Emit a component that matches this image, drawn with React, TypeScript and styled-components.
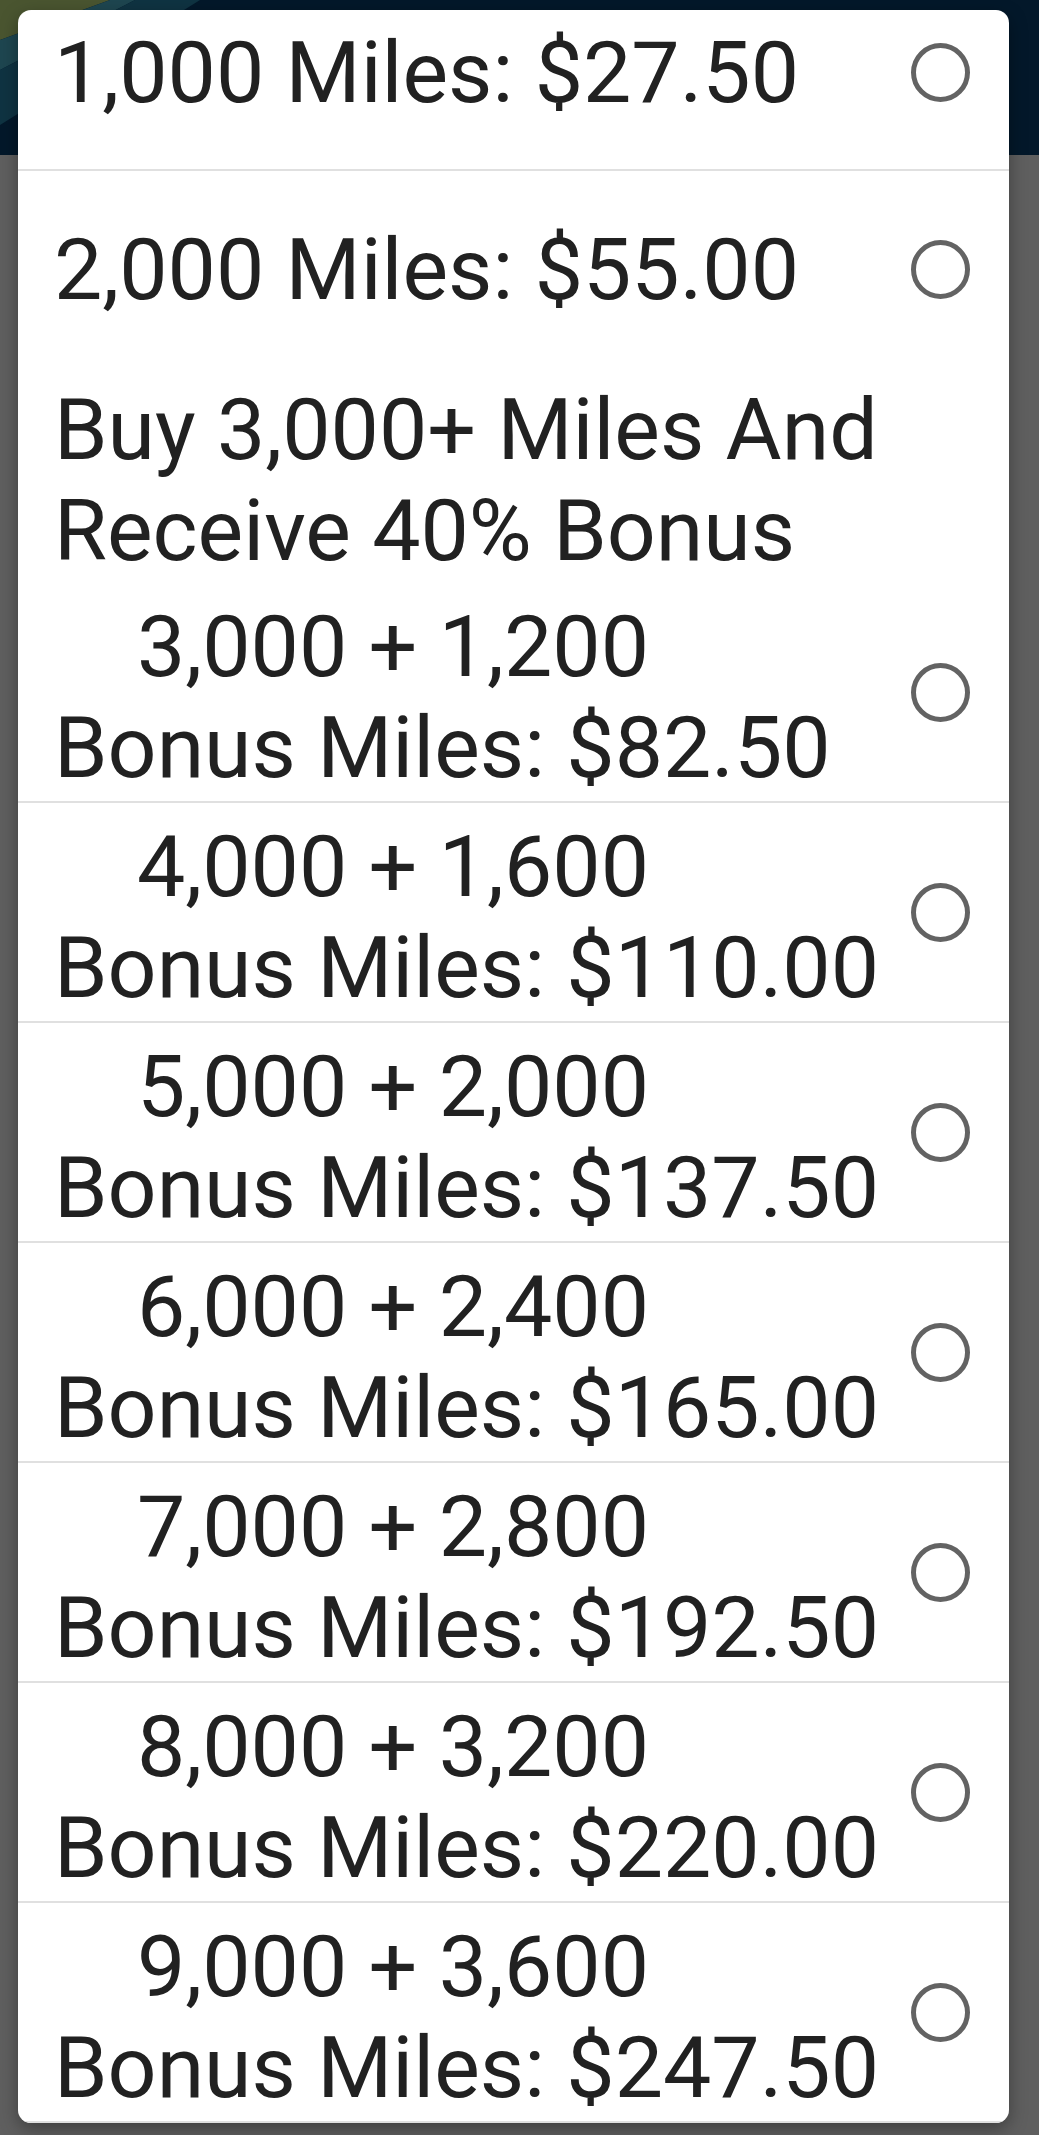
import React from "react";
import styled, { createGlobalStyle } from "styled-components";

const GlobalStyle = createGlobalStyle`
  html, body {
    margin: 0;
    padding: 0;
    background: #5f5f5f;
  }
  * { box-sizing: border-box; }
`;

const Screen = styled.div`
  position: relative;
  width: 1039px;
  height: 2135px;
  overflow: hidden;
  display: flex;
  flex-direction: column;
  background: #5f5f5f;
  font-family: Roboto, "Noto Sans", "Liberation Sans", sans-serif;
`;

const AppBar = styled.header`
  height: 155px;
  flex: none;
  background: #03182a;
  position: relative;
  overflow: hidden;
`;

const AppBody = styled.main`
  flex: 1;
  background: #5f5f5f;
`;

const Dialog = styled.div`
  position: absolute;
  top: 10px;
  left: 18px;
  right: 30px;
  bottom: 12px;
  background: #ffffff;
  border-radius: 13px;
  overflow: hidden;
  box-shadow: 0 6px 18px rgba(0, 0, 0, 0.35);
`;

const OptionList = styled.div`
  display: flex;
  flex-direction: column;
  margin-top: -35px;
`;

const OptionRow = styled.label<{ $divider?: boolean; $twoLine?: boolean }>`
  display: flex;
  align-items: center;
  justify-content: space-between;
  min-height: 196px;
  padding: ${(p) => (p.$twoLine ? "13px 39px 3px 36px" : "8px 39px 8px 36px")};
  border-bottom: ${(p) => (p.$divider ? "2px solid #e0e0e0" : "none")};
`;

const GroupHeading = styled.div`
  padding: 12px 36px 2px 36px;
  font-size: 86px;
  line-height: normal;
  color: #212121;
`;

const Label = styled.span`
  display: flex;
  flex-direction: column;
  font-size: 86px;
  line-height: normal;
  color: #212121;
  white-space: nowrap;
`;

const Line = styled.span<{ $indent?: boolean }>`
  display: block;
  padding-left: ${(p) => (p.$indent ? "83px" : "0")};
`;

const Radio = styled.span<{ $shift?: boolean }>`
  flex: none;
  width: 59px;
  height: 59px;
  border-radius: 50%;
  border: 5px solid #636363;
  background: #ffffff;
  margin-top: ${(p) => (p.$shift ? "-10px" : "0")};
`;

const single = [
  { text: "1,000 Miles: $27.50", divider: true },
  { text: "2,000 Miles: $55.00", divider: false },
];

const bonus = [
  ["3,000 + 1,200", "$82.50"],
  ["4,000 + 1,600", "$110.00"],
  ["5,000 + 2,000", "$137.50"],
  ["6,000 + 2,400", "$165.00"],
  ["7,000 + 2,800", "$192.50"],
  ["8,000 + 3,200", "$220.00"],
  ["9,000 + 3,600", "$247.50"],
];

export default function App() {
  return (
    <>
      <GlobalStyle />
      <Screen>
        <AppBar>
          <svg width="260" height="155" viewBox="0 0 260 155">
            <polygon points="0,0 110,0 0,40" fill="#4a5530" />
            <polygon points="0,40 110,0 135,0 0,70" fill="#1e4650" />
            <polygon points="0,70 135,0 200,0 0,125" fill="#0f3342" />
          </svg>
        </AppBar>
        <AppBody />
        <Dialog>
          <OptionList>
            {single.map((s) => (
              <OptionRow key={s.text} $divider={s.divider}>
                <Label>
                  <Line>{s.text}</Line>
                </Label>
                <Radio />
              </OptionRow>
            ))}
            <GroupHeading>
              <Line>Buy 3,000+ Miles And</Line>
              <Line>Receive 40% Bonus</Line>
            </GroupHeading>
            {bonus.map(([miles, price]) => (
              <OptionRow key={miles} $divider $twoLine>
                <Label>
                  <Line $indent>{miles}</Line>
                  <Line>Bonus Miles: {price}</Line>
                </Label>
                <Radio $shift />
              </OptionRow>
            ))}
          </OptionList>
        </Dialog>
      </Screen>
    </>
  );
}
